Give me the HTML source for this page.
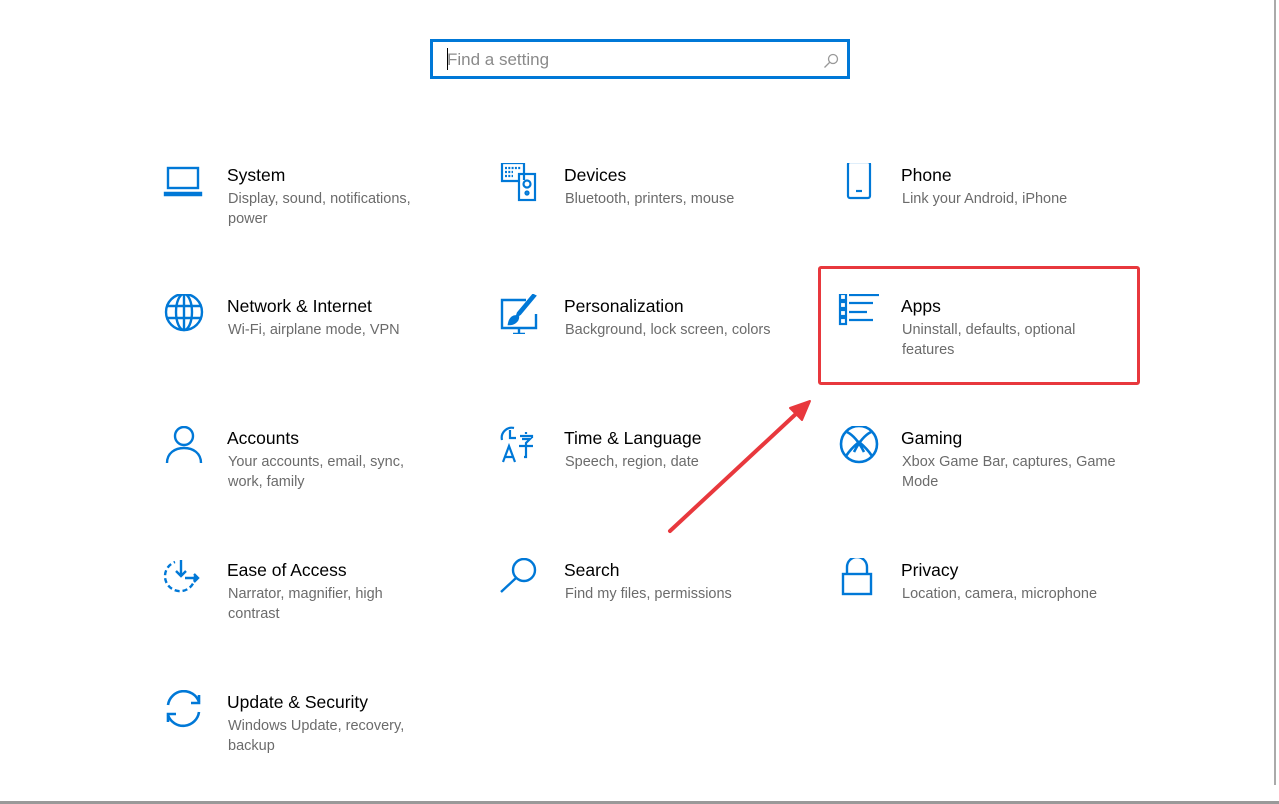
<!DOCTYPE html>
<html><head><meta charset="utf-8"><style>
body{margin:0;width:1279px;height:804px;background:#fff;position:relative;overflow:hidden;font-family:"Liberation Sans",sans-serif}
.search{position:absolute;left:430px;top:39px;width:414px;height:34px;border:3px solid #0078d7;box-sizing:content-box}
.search span{position:absolute;left:14px;top:8px;font-size:17px;color:#8a8a8a}
.search i{position:absolute;left:14px;top:6px;width:1px;height:22px;background:#000}
.it{position:absolute}
.it svg{position:absolute;left:0;top:0}
.t{position:absolute;left:64px;top:0;font-size:17.5px;color:#000;white-space:nowrap;line-height:24px}
.d{position:absolute;left:65px;top:26px;font-size:14.5px;color:#6b6b6b;line-height:20px;width:200px}
</style></head><body>
<div class="search"><i></i><span>Find a setting</span>
<svg style="position:absolute;left:390px;top:11px" width="16" height="16" viewBox="0 0 16 16" fill="none" stroke="#999" stroke-width="1.3"><circle cx="10" cy="6" r="4.5"/><path d="M7 9L1.5 14.5"/></svg></div>

<div style="position:absolute;left:1274px;top:0;width:2px;height:785px;background:#aaa"></div>
<div style="position:absolute;left:0;top:801px;width:1279px;height:3px;background:#999"></div>

<div class="it" style="left:163px;top:163px"><svg width="42" height="40" viewBox="0 0 42 40" fill="none" stroke="#0078d7" stroke-width="2.4"><rect x="5" y="5" width="30" height="20"/><path d="M2 30h36v2H2z"/></svg><div class="t">System</div><div class="d">Display, sound, notifications, power</div></div>
<div class="it" style="left:500px;top:163px"><svg width="42" height="40" viewBox="0 0 42 40" fill="none" stroke="#0078d7" stroke-width="2.2"><path d="M24 17V0H2v18h16"/><rect x="19" y="11" width="16" height="26"/><circle cx="27" cy="21" r="3.5"/><circle cx="27" cy="30" r="1.5"/><path d="M5 5h16M5 9h8M5 13h8" stroke-dasharray="2 1.3"/></svg><div class="t">Devices</div><div class="d" style="width:240px">Bluetooth, printers, mouse</div></div>
<div class="it" style="left:837px;top:163px"><svg width="42" height="40" viewBox="0 0 42 40" fill="none" stroke="#0078d7" stroke-width="2.2"><rect x="11" y="-1" width="22" height="36" rx="2"/><path d="M19 28h6"/></svg><div class="t">Phone</div><div class="d" style="width:240px">Link your Android, iPhone</div></div>

<div class="it" style="left:163px;top:294px"><svg width="42" height="40" viewBox="0 0 42 40" fill="none" stroke="#0078d7" stroke-width="2.4"><circle cx="21" cy="18" r="18"/><ellipse cx="21" cy="18" rx="8" ry="18"/><path d="M3 12h36M3 24h36M21 0v36"/></svg><div class="t">Network &amp; Internet</div><div class="d" style="width:240px">Wi-Fi, airplane mode, VPN</div></div>
<div class="it" style="left:500px;top:294px"><svg width="42" height="40" viewBox="0 0 42 40" fill="none" stroke="#0078d7" stroke-width="2.4"><path d="M26 6H2v28h34V20"/><path d="M13 40h12M19 34v6"/><path d="M35 2L20 20l-3 2 1-3L33 1z" fill="#0078d7"/><path d="M9 30c1-6 5-9 9-7 0 4-4 7-9 7z" fill="#0078d7"/></svg><div class="t">Personalization</div><div class="d" style="width:240px">Background, lock screen, colors</div></div>
<div class="it" style="left:837px;top:294px"><svg width="42" height="40" viewBox="0 0 42 40" fill="none" stroke="#0078d7" stroke-width="2.2"><rect x="3" y="0" width="6" height="6"/><rect x="3" y="8" width="6" height="6"/><rect x="3" y="16" width="6" height="6"/><rect x="3" y="24" width="6" height="6"/><path d="M12 1h30M12 9h24M12 18h18M12 26h24"/></svg><div class="t">Apps</div><div class="d">Uninstall, defaults, optional features</div></div>

<div class="it" style="left:163px;top:426px"><svg width="42" height="40" viewBox="0 0 42 40" fill="none" stroke="#0078d7" stroke-width="2.4"><circle cx="21" cy="10" r="9"/><path d="M4 37c0-10 8-15 17-15s17 5 17 15"/></svg><div class="t">Accounts</div><div class="d">Your accounts, email, sync, work, family</div></div>
<div class="it" style="left:500px;top:426px"><svg width="42" height="40" viewBox="0 0 42 40" fill="none" stroke="#0078d7" stroke-width="2.2"><path d="M14 2A10 10 0 0 0 2 14"/><path d="M10 4v8h6"/><path d="M3 36l6-16 6 16M5 31h8"/><path d="M26 6v2M20 10h12v2M22 13h8l-4 4v14h-2M19 20h14"/></svg><div class="t">Time &amp; Language</div><div class="d">Speech, region, date</div></div>
<div class="it" style="left:837px;top:426px"><svg width="42" height="40" viewBox="0 0 42 40" fill="none" stroke="#0078d7" stroke-width="2.6"><circle cx="22" cy="18" r="18"/><path d="M10 6c6 3 12 10 17 20M34 6c-6 3-12 10-17 20M9 30c4-6 8-10 13-14 5 4 9 8 13 14" /></svg><div class="t">Gaming</div><div class="d" style="width:230px">Xbox Game Bar, captures, Game Mode</div></div>

<div class="it" style="left:163px;top:558px"><svg width="42" height="40" viewBox="0 0 42 40" fill="none" stroke="#0078d7" stroke-width="2.4"><path d="M32 18A15 15 0 1 1 12 4" stroke-dasharray="5 3"/><path d="M18 2v16M13 13l5 5 5-5M22 20h13M31 16l4 4-4 4"/></svg><div class="t">Ease of Access</div><div class="d">Narrator, magnifier, high contrast</div></div>
<div class="it" style="left:500px;top:558px"><svg width="42" height="40" viewBox="0 0 42 40" fill="none" stroke="#0078d7" stroke-width="2.4"><circle cx="24" cy="12" r="11"/><path d="M16 20L1 34"/></svg><div class="t">Search</div><div class="d" style="width:240px">Find my files, permissions</div></div>
<div class="it" style="left:837px;top:558px"><svg width="42" height="40" viewBox="0 0 42 40" fill="none" stroke="#0078d7" stroke-width="2.4"><rect x="6" y="16" width="28" height="20"/><path d="M10 16V9a10 10 0 0 1 20 0v7"/></svg><div class="t">Privacy</div><div class="d" style="width:240px">Location, camera, microphone</div></div>

<div class="it" style="left:163px;top:690px"><svg width="42" height="40" viewBox="0 0 42 40" fill="none" stroke="#0078d7" stroke-width="2.6"><path d="M5 15A16 16 0 0 1 36 12"/><path d="M36 5v8h-8"/><path d="M36 22A16 16 0 0 1 5 25"/><path d="M5 32v-8h8"/></svg><div class="t">Update &amp; Security</div><div class="d">Windows Update, recovery, backup</div></div>

<div style="position:absolute;left:818px;top:266px;width:316px;height:113px;border:3px solid #e8383d;border-radius:3px"></div>
<svg style="position:absolute;left:0;top:0" width="1279" height="804"><path d="M670 531L798 412" stroke="#e8383d" stroke-width="4" stroke-linecap="round"/><path d="M810 401L790 408L802 420Z" fill="#e8383d" stroke="#e8383d" stroke-width="2" stroke-linejoin="round"/></svg>
</body></html>
